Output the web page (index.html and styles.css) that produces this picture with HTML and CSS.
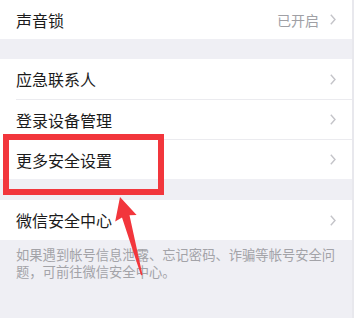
FILE: index.html
```html
<!DOCTYPE html>
<html lang="zh-CN">
<head>
<meta charset="utf-8">
<link rel="stylesheet" href="styles.css">
</head>
<body>
<div class="page">
  <div class="group">
    <div class="row first-row">
      <div class="cell">
        <span class="label">声音锁</span>
        <span class="value">已开启</span>
        <svg class="chev" viewBox="0 0 6 11" width="6" height="11"><polyline points="0.8,0.8 5,5.5 0.8,10.2" fill="none" stroke="#c4c4c9" stroke-width="1.4"/></svg>
      </div>
    </div>
  </div>
  <div class="gap"></div>
  <div class="group">
    <div class="row">
      <div class="cell">
        <span class="label">应急联系人</span>
        <svg class="chev" viewBox="0 0 6 11" width="6" height="11"><polyline points="0.8,0.8 5,5.5 0.8,10.2" fill="none" stroke="#c4c4c9" stroke-width="1.4"/></svg>
      </div>
    </div>
    <div class="row">
      <div class="cell sep">
        <span class="label">登录设备管理</span>
        <svg class="chev" viewBox="0 0 6 11" width="6" height="11"><polyline points="0.8,0.8 5,5.5 0.8,10.2" fill="none" stroke="#c4c4c9" stroke-width="1.4"/></svg>
      </div>
    </div>
    <div class="row">
      <div class="cell sep">
        <span class="label">更多安全设置</span>
        <svg class="chev" viewBox="0 0 6 11" width="6" height="11"><polyline points="0.8,0.8 5,5.5 0.8,10.2" fill="none" stroke="#c4c4c9" stroke-width="1.4"/></svg>
      </div>
    </div>
  </div>
  <div class="gap gap-2"></div>
  <div class="group">
    <div class="row">
      <div class="cell">
        <span class="label">微信安全中心</span>
        <svg class="chev" viewBox="0 0 6 11" width="6" height="11"><polyline points="0.8,0.8 5,5.5 0.8,10.2" fill="none" stroke="#c4c4c9" stroke-width="1.4"/></svg>
      </div>
    </div>
  </div>
  <p class="footer">如果遇到帐号信息泄露、忘记密码、诈骗等帐号安全问题，可前往微信安全中心。</p>

  <div class="highlight"></div>
  <svg class="arrow" viewBox="0 0 354 318" width="354" height="318">
    <polygon points="120,197 136.6,215 129.5,215.3 142.5,275 141,275.2 122,217.6 115.2,221.5" fill="#f2363c"/>
  </svg>
  <div class="scroll-edge"></div>
</div>
</body>
</html>
```
FILE: styles.css
```css
html, body {
  margin: 0;
  padding: 0;
  background: #efeff4;
}
body {
  font-family: "Noto Sans CJK SC", "Noto Sans", sans-serif;
  width: 354px;
  height: 318px;
  overflow: hidden;
}
.page {
  position: relative;
  width: 354px;
  height: 318px;
}
.group {
  background: #ffffff;
}
.row {
  padding-left: 16px;
}
.cell {
  height: 40px;
  box-sizing: border-box;
  display: flex;
  align-items: center;
  padding-right: 18px;
}
.first-row .cell {
  height: 39px;
}
.cell.sep {
  border-top: 1px solid #ebebef;
}
.label {
  flex: 1;
  font-size: 16px;
  color: #1b1b1b;
  line-height: 1;
}
.value {
  font-size: 14px;
  color: #a0a0a5;
  margin-right: 11px;
  line-height: 1;
}
.chev {
  display: block;
}
.gap {
  height: 20px;
}
.gap-2 {
  height: 21px;
}
.footer {
  margin: 0;
  padding: 6px 16px 0 16px;
  font-size: 13.3px;
  line-height: 17px;
  color: #a3a3a8;
}
.highlight {
  position: absolute;
  left: 3px;
  top: 134px;
  width: 161px;
  height: 61px;
  box-sizing: border-box;
  border: 6px solid #f2363c;
}
.arrow {
  position: absolute;
  left: 0;
  top: 0;
}
.scroll-edge {
  position: absolute;
  right: 0;
  top: 0;
  width: 2px;
  height: 318px;
  background: #e8e8ed;
}
```
